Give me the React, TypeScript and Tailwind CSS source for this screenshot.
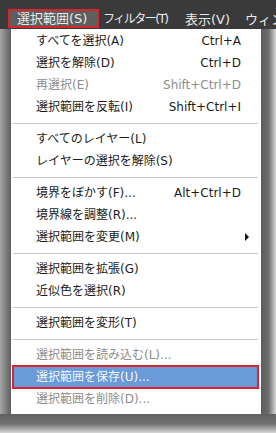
type Item =
  | { sep: true }
  | { label: string; shortcut?: string; disabled?: boolean; submenu?: boolean; active?: boolean }

const items: Item[] = [
  { label: 'すべてを選択(A)', shortcut: 'Ctrl+A' },
  { label: '選択を解除(D)', shortcut: 'Ctrl+D' },
  { label: '再選択(E)', shortcut: 'Shift+Ctrl+D', disabled: true },
  { label: '選択範囲を反転(I)', shortcut: 'Shift+Ctrl+I' },
  { sep: true },
  { label: 'すべてのレイヤー(L)' },
  { label: 'レイヤーの選択を解除(S)' },
  { sep: true },
  { label: '境界をぼかす(F)...', shortcut: 'Alt+Ctrl+D' },
  { label: '境界線を調整(R)...' },
  { label: '選択範囲を変更(M)', submenu: true },
  { sep: true },
  { label: '選択範囲を拡張(G)' },
  { label: '近似色を選択(R)' },
  { sep: true },
  { label: '選択範囲を変形(T)' },
  { sep: true },
  { label: '選択範囲を読み込む(L)...', disabled: true },
  { label: '選択範囲を保存(U)...', active: true },
  { label: '選択範囲を削除(D)...', disabled: true },
]

const font = { fontFamily: '"DejaVu Sans", "Noto Sans CJK JP", sans-serif' }

function MenuRow({ item }: { item: Item }) {
  if ('sep' in item) {
    return (
      <div className="h-[10px] flex items-center pl-[2px] pr-[3px]">
        <div className="h-px w-full bg-[#c4c4c4]" />
      </div>
    )
  }

  if (item.active) {
    return (
      <div className="relative h-[22px] ml-[2px] mr-[3px] bg-[#6a9ad8] flex items-center pl-[23px] text-[12px] leading-none text-[#f4f6fa] whitespace-nowrap">
        {item.label}
        <div className="absolute -inset-px border-2 border-[#d8242c]" />
      </div>
    )
  }

  return (
    <div
      className={`h-[22px] flex items-center pl-[25px] pr-[20px] text-[12px] leading-none whitespace-nowrap ${
        item.disabled ? 'text-[#8d8d8d]' : 'text-[#1c1c1c]'
      }`}
    >
      <span className="flex-1">{item.label}</span>
      {item.shortcut && <span>{item.shortcut}</span>}
      {item.submenu && (
        <svg width="5" height="8" viewBox="0 0 5 8" className="mr-[-9px]">
          <path d="M0 0 L4 4 L0 8 Z" fill="#111" />
        </svg>
      )}
    </div>
  )
}

export default function App() {
  return (
    <div className="w-[276px] h-[433px] overflow-hidden flex flex-col bg-[#6a6a6a]" style={font}>
      <div className="h-[29px] shrink-0 bg-[#3a3a3a] flex items-end overflow-hidden text-[13px] leading-none text-[#e9e9e9] whitespace-nowrap">
        <div className="shrink-0 ml-[8px] mb-px w-[91px] h-[19px] bg-[#5e5e5e] border-2 border-[#d4262c] flex items-center pl-[7px]">
          選択範囲(S)
        </div>
        <div className="shrink-0 w-[86px] pl-[4px] h-[20px] flex items-center text-[12px] tracking-[-1.5px]">
          フィルター(T)
        </div>
        <div className="shrink-0 w-[60px] h-[20px] flex items-center">表示(V)</div>
        <div className="shrink-0 h-[20px] flex items-center">ウィン</div>
      </div>

      <div className="flex h-[385px] shrink-0">
        <div className="w-[11px] bg-linear-to-r from-[#a6a6a6] to-[#5f5f5f]" />
        <div className="w-[250px] bg-white pt-px">
          {items.map((item, i) => (
            <MenuRow key={i} item={item} />
          ))}
        </div>
        <div className="flex-1 bg-linear-to-r from-[#5c5c5c] via-[#6e6e6e] to-[#d9d9d9]" />
      </div>

      <div className="flex-1 bg-linear-to-b from-[#606060] via-[#707070] to-[#d6d6d6]" />
    </div>
  )
}
